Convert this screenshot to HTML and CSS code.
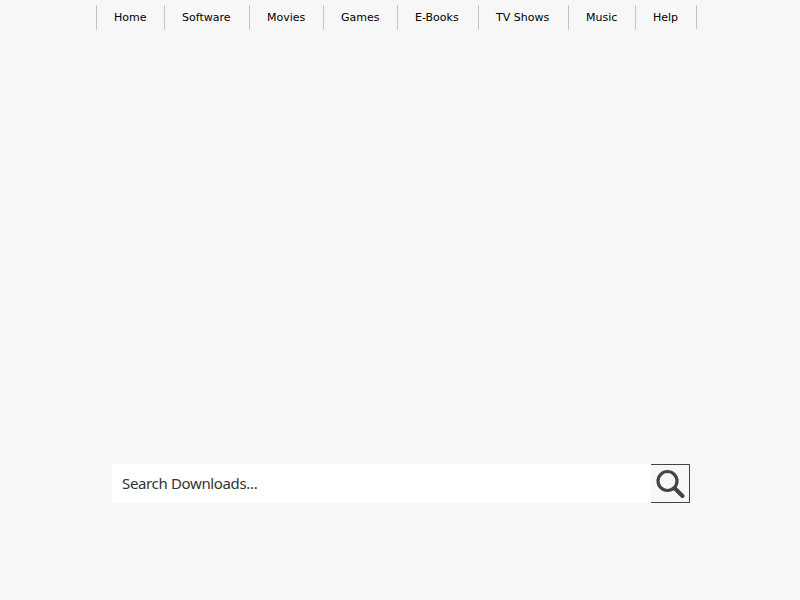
FILE: index.html
```html
<!DOCTYPE html>
<html lang="en">
<head>
<meta charset="utf-8">
<title>Downloads</title>
<link rel="stylesheet" href="styles.css">
</head>
<body>
<nav class="nav">
  <ul class="nav-list">
    <li class="nav-item"><a href="#">Home</a></li>
    <li class="nav-item"><a href="#">Software</a></li>
    <li class="nav-item"><a href="#">Movies</a></li>
    <li class="nav-item"><a href="#">Games</a></li>
    <li class="nav-item"><a href="#">E-Books</a></li>
    <li class="nav-item"><a href="#">TV Shows</a></li>
    <li class="nav-item"><a href="#">Music</a></li>
    <li class="nav-item"><a href="#">Help</a></li>
  </ul>
</nav>
<form class="search">
  <div class="search-field">Search Downloads...</div>
  <button class="search-button" type="button" aria-label="Search">
    <svg class="search-icon" viewBox="0 0 30 30" width="30" height="30"><circle cx="12.5" cy="12" r="9.5" fill="none" stroke="#444" stroke-width="3.2"/><path d="M19.5 19 L27.5 27" fill="none" stroke="#444" stroke-width="4" stroke-linecap="round"/></svg>
  </button>
</form>
</body>
</html>
```
FILE: styles.css
```css
html, body { margin: 0; padding: 0; height: 100%; }
body { background: #f7f7f7; font-family: "DejaVu Sans", sans-serif; color: #000; overflow: hidden; }
.nav { padding: 5px 0 0 96px; }
.nav-list { display: grid; grid-template-columns: 68px 85px 74px 74px 81px 90px 67px 61px; width: 600px; list-style: none; margin: 0; padding: 0; border-right: 1px solid #c4c4c4; height: 24px; }
.nav-item { border-left: 1px solid #c4c4c4; padding-left: 17px; font-size: 11px; line-height: 25px; white-space: nowrap; }
.nav-item a { color: #000; text-decoration: none; }
.search { display: flex; margin: 435px 0 0 112px; width: 578px; height: 39px; }
.search-field { flex: 1; background: #fff; padding-left: 10px; font-size: 15px; letter-spacing: -0.35px; line-height: 39px; color: #333; font-family: "Noto Sans", sans-serif; }
.search-button { width: 39px; height: 39px; box-sizing: border-box; padding: 0; background: #f7f7f7; border: 1px solid #444; border-left: 0; display: flex; align-items: center; justify-content: center; }
.search-icon { display: block; }
```
